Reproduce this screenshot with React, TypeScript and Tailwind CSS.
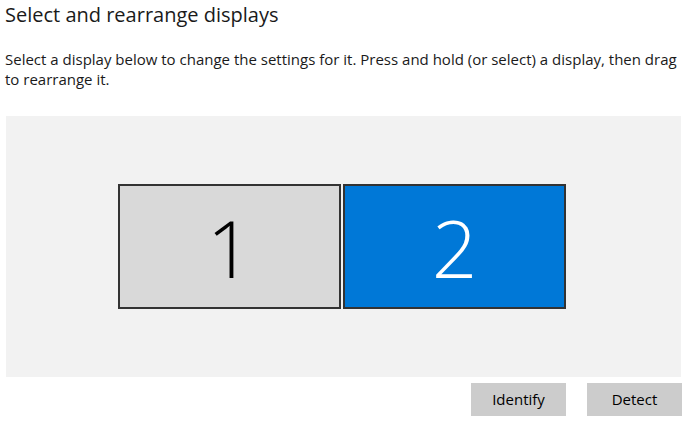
export default function App() {
  return (
    <div className="w-[690px] h-[425px] bg-white overflow-hidden text-black" style={{ fontFamily: '"Open Sans", "Noto Sans", sans-serif' }}>
      <div className="pl-[5px] pt-[1px] text-[20px] leading-[28px] text-[#1a1a1a]">Select and rearrange displays</div>
      <p className="pl-[5px] w-[688px] mt-[20px] text-[15px] leading-[20px] text-[#1a1a1a]">
        Select a display below to change the settings for it. Press and hold (or select) a display, then drag to rearrange it.
      </p>
      <div className="ml-[6px] mt-[27px] w-[675px] h-[261px] bg-[#f2f2f2] flex items-center justify-center pr-[3px]">
        <div className="flex gap-[2px]">
          <div className="w-[223px] h-[125px] bg-[#d9d9d9] border-2 border-[#333333] flex items-center justify-center">
            <span className="text-[80px] font-light leading-none text-black">1</span>
          </div>
          <div className="w-[223px] h-[125px] bg-[#0078d7] border-2 border-[#333333] flex items-center justify-center">
            <span className="text-[80px] font-light leading-none text-white">2</span>
          </div>
        </div>
      </div>
      <div className="mt-[6px] w-[682px] flex justify-end gap-[21px]">
        <button className="w-[95px] h-[33px] bg-[#cccccc] text-[15px] text-black">Identify</button>
        <button className="w-[95px] h-[33px] bg-[#cccccc] text-[15px] text-black">Detect</button>
      </div>
    </div>
  );
}
